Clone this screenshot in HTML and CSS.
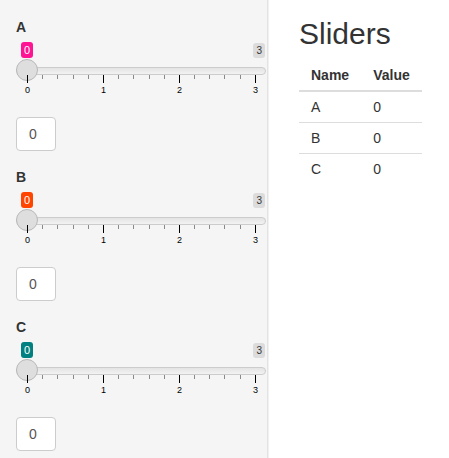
FILE: index.html
```html
<!DOCTYPE html>
<html lang="en">
<head>
<meta charset="utf-8">
<title>Sliders</title>
<link rel="stylesheet" href="styles.css">
</head>
<body>
<div class="page">
  <aside class="sidebar">
    <div class="field">
      <label class="field-label">A</label>
      <div class="slider">
        <span class="slider-line"></span>
        <span class="slider-handle"></span>
        <span class="slider-single pink">0</span>
        <span class="slider-max">3</span>
        <div class="slider-ticks">
          <span class="tick major"></span><span class="tick"></span><span class="tick"></span><span class="tick"></span><span class="tick"></span>
          <span class="tick major"></span><span class="tick"></span><span class="tick"></span><span class="tick"></span><span class="tick"></span>
          <span class="tick major"></span><span class="tick"></span><span class="tick"></span><span class="tick"></span><span class="tick"></span>
          <span class="tick major"></span>
        </div>
        <div class="slider-nums"><span>0</span><span>1</span><span>2</span><span>3</span></div>
      </div>
      <input class="num" type="text" value="0">
    </div>
    <div class="field">
      <label class="field-label">B</label>
      <div class="slider">
        <span class="slider-line"></span>
        <span class="slider-handle"></span>
        <span class="slider-single orange">0</span>
        <span class="slider-max">3</span>
        <div class="slider-ticks">
          <span class="tick major"></span><span class="tick"></span><span class="tick"></span><span class="tick"></span><span class="tick"></span>
          <span class="tick major"></span><span class="tick"></span><span class="tick"></span><span class="tick"></span><span class="tick"></span>
          <span class="tick major"></span><span class="tick"></span><span class="tick"></span><span class="tick"></span><span class="tick"></span>
          <span class="tick major"></span>
        </div>
        <div class="slider-nums"><span>0</span><span>1</span><span>2</span><span>3</span></div>
      </div>
      <input class="num" type="text" value="0">
    </div>
    <div class="field">
      <label class="field-label">C</label>
      <div class="slider">
        <span class="slider-line"></span>
        <span class="slider-handle"></span>
        <span class="slider-single teal">0</span>
        <span class="slider-max">3</span>
        <div class="slider-ticks">
          <span class="tick major"></span><span class="tick"></span><span class="tick"></span><span class="tick"></span><span class="tick"></span>
          <span class="tick major"></span><span class="tick"></span><span class="tick"></span><span class="tick"></span><span class="tick"></span>
          <span class="tick major"></span><span class="tick"></span><span class="tick"></span><span class="tick"></span><span class="tick"></span>
          <span class="tick major"></span>
        </div>
        <div class="slider-nums"><span>0</span><span>1</span><span>2</span><span>3</span></div>
      </div>
      <input class="num" type="text" value="0">
    </div>
  </aside>
  <main class="main">
    <h2 class="title">Sliders</h2>
    <table class="values">
      <thead>
        <tr><th>Name</th><th>Value</th></tr>
      </thead>
      <tbody>
        <tr><td>A</td><td>0</td></tr>
        <tr><td>B</td><td>0</td></tr>
        <tr><td>C</td><td>0</td></tr>
      </tbody>
    </table>
  </main>
</div>
</body>
</html>
```
FILE: styles.css
```css
html, body {
  margin: 0;
  padding: 0;
  background: #fff;
}
body {
  font-family: "Liberation Sans", Arial, Helvetica, sans-serif;
  font-size: 14px;
  line-height: 20px;
  color: #333;
}
.page {
  display: flex;
  min-height: 100vh;
}
.sidebar {
  box-sizing: border-box;
  width: 268px;
  flex: none;
  background: #f5f5f5;
  border-right: 1px solid #e3e3e3;
  box-shadow: 1px 0 0 #f1f1f1;
  padding: 17px 1px 0 16px;
}
.field {
  margin-bottom: 16px;
}
.field-label {
  display: block;
  font-weight: bold;
  margin-bottom: 5px;
}
.slider {
  position: relative;
  height: 55px;
}
.slider-line {
  position: absolute;
  top: 25px;
  left: 0;
  right: 0;
  height: 8px;
  box-sizing: border-box;
  border: 1px solid #cccccc;
  border-radius: 8px;
  background: linear-gradient(to bottom, #e4e4e4, #f2f2f2);
}
.slider-handle {
  position: absolute;
  top: 17px;
  left: 0;
  width: 22px;
  height: 22px;
  box-sizing: border-box;
  border: 1px solid #b8b8b8;
  border-radius: 50%;
  background: #dedede;
}
.slider-single {
  position: absolute;
  top: 0;
  left: 5px;
  font-size: 11px;
  line-height: 14px;
  padding: 1px 3px;
  color: #fff;
  border-radius: 3px;
}
.pink { background: #ff1493; }
.orange { background: #ff4500; }
.teal { background: #008080; }
.slider-max {
  position: absolute;
  top: 1px;
  right: 1px;
  font-size: 10px;
  line-height: 13px;
  padding: 1px 3px;
  color: #333;
  background: rgba(0, 0, 0, 0.1);
  border-radius: 3px;
}
.slider-ticks {
  position: absolute;
  top: 33px;
  left: 11px;
  right: 10px;
  display: flex;
  justify-content: space-between;
  align-items: flex-start;
}
.tick {
  width: 1px;
  height: 4px;
  background: #8a8a8a;
}
.tick.major {
  height: 8px;
  background: #000;
}
.slider-nums {
  position: absolute;
  top: 44px;
  left: 11px;
  right: 10px;
  display: flex;
  justify-content: space-between;
  font-size: 9px;
  line-height: 9px;
  color: #000;
}
.slider-nums span {
  width: 1px;
  display: flex;
  justify-content: center;
}
.num {
  display: block;
  box-sizing: border-box;
  width: 40px;
  height: 34px;
  margin: 20px 0 0;
  padding: 6px 12px;
  border: 1px solid #ccc;
  border-radius: 4px;
  background: #fff;
  font-family: inherit;
  font-size: 14px;
  line-height: 20px;
  color: #555;
  outline: none;
}
.main {
  padding-left: 31px;
}
.title {
  font-size: 30px;
  font-weight: normal;
  line-height: 33px;
  margin: 17px 0 10px;
  color: #333;
}
.values {
  border-collapse: collapse;
  border-spacing: 0;
}
.values th {
  text-align: left;
  font-weight: bold;
  padding: 5px 12px;
  border-bottom: 2px solid #ddd;
}
.values td {
  padding: 5px 12px;
  border-top: 1px solid #ddd;
}
```
